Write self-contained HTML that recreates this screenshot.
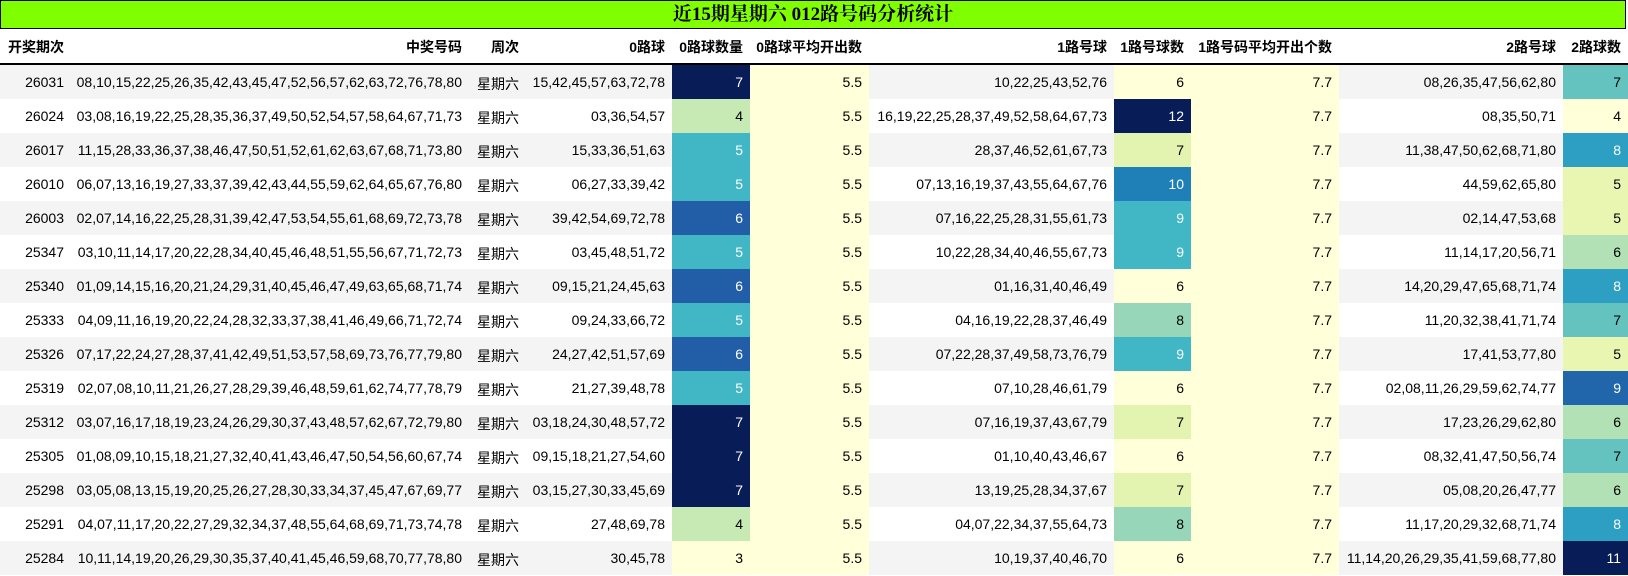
<!DOCTYPE html>
<html><head><meta charset="utf-8"><style>
body{margin:0;background:#fff;font-family:"Liberation Sans","Noto Sans CJK SC",sans-serif;font-size:14px;color:#000;width:1628px;height:576px;overflow:hidden;position:relative}
.title{position:absolute;left:0;top:0;width:1624px;height:27px;background:#7fff00;border:1px solid #000;text-align:center;font:bold 19px "Liberation Serif","Noto Serif CJK SC",serif;line-height:28px}
.r{position:absolute;left:0;width:1628px;display:flex}
.r div{box-sizing:border-box;height:100%;padding-right:7px;text-align:right;white-space:nowrap;flex:none;display:flex;align-items:center;justify-content:flex-end}
.h{top:29px;height:34px;border-bottom:2px solid #000;font-weight:bold}
.h div{padding-top:2px}
.o{background:#f4f4f4}
.c{color:#fff}
.a{background:#ffffd9}
.w{padding-top:4px}
</style></head><body>
<div class="title">近15期星期六 012路号码分析统计</div>
<div id="t"></div>
<script>
var B=[0,71,469,526,672,750,869,1114,1191,1339,1563,1628];
var d=[
["26031","08,10,15,22,25,26,35,42,43,45,47,52,56,57,62,63,72,76,78,80","15,42,45,57,63,72,78",7,"10,22,25,43,52,76",6,"08,26,35,47,56,62,80",7],
["26024","03,08,16,19,22,25,28,35,36,37,49,50,52,54,57,58,64,67,71,73","03,36,54,57",4,"16,19,22,25,28,37,49,52,58,64,67,73",12,"08,35,50,71",4],
["26017","11,15,28,33,36,37,38,46,47,50,51,52,61,62,63,67,68,71,73,80","15,33,36,51,63",5,"28,37,46,52,61,67,73",7,"11,38,47,50,62,68,71,80",8],
["26010","06,07,13,16,19,27,33,37,39,42,43,44,55,59,62,64,65,67,76,80","06,27,33,39,42",5,"07,13,16,19,37,43,55,64,67,76",10,"44,59,62,65,80",5],
["26003","02,07,14,16,22,25,28,31,39,42,47,53,54,55,61,68,69,72,73,78","39,42,54,69,72,78",6,"07,16,22,25,28,31,55,61,73",9,"02,14,47,53,68",5],
["25347","03,10,11,14,17,20,22,28,34,40,45,46,48,51,55,56,67,71,72,73","03,45,48,51,72",5,"10,22,28,34,40,46,55,67,73",9,"11,14,17,20,56,71",6],
["25340","01,09,14,15,16,20,21,24,29,31,40,45,46,47,49,63,65,68,71,74","09,15,21,24,45,63",6,"01,16,31,40,46,49",6,"14,20,29,47,65,68,71,74",8],
["25333","04,09,11,16,19,20,22,24,28,32,33,37,38,41,46,49,66,71,72,74","09,24,33,66,72",5,"04,16,19,22,28,37,46,49",8,"11,20,32,38,41,71,74",7],
["25326","07,17,22,24,27,28,37,41,42,49,51,53,57,58,69,73,76,77,79,80","24,27,42,51,57,69",6,"07,22,28,37,49,58,73,76,79",9,"17,41,53,77,80",5],
["25319","02,07,08,10,11,21,26,27,28,29,39,46,48,59,61,62,74,77,78,79","21,27,39,48,78",5,"07,10,28,46,61,79",6,"02,08,11,26,29,59,62,74,77",9],
["25312","03,07,16,17,18,19,23,24,26,29,30,37,43,48,57,62,67,72,79,80","03,18,24,30,48,57,72",7,"07,16,19,37,43,67,79",7,"17,23,26,29,62,80",6],
["25305","01,08,09,10,15,18,21,27,32,40,41,43,46,47,50,54,56,60,67,74","09,15,18,21,27,54,60",7,"01,10,40,43,46,67",6,"08,32,41,47,50,56,74",7],
["25298","03,05,08,13,15,19,20,25,26,27,28,30,33,34,37,45,47,67,69,77","03,15,27,30,33,45,69",7,"13,19,25,28,34,37,67",7,"05,08,20,26,47,77",6],
["25291","04,07,11,17,20,22,27,29,32,34,37,48,55,64,68,69,71,73,74,78","27,48,69,78",4,"04,07,22,34,37,55,64,73",8,"11,17,20,29,32,68,71,74",8],
["25284","10,11,14,19,20,26,29,30,35,37,40,41,45,46,59,68,70,77,78,80","30,45,78",3,"10,19,37,40,46,70",6,"11,14,20,26,29,35,41,59,68,77,80",11]];
var c0={3:"#ffffd9",4:"#c7e9b4",5:"#41b6c4",6:"#225ea8",7:"#081d58"};
var c1={6:"#ffffd9",7:"#e3f4b1",8:"#97d6b9",9:"#41b6c4",10:"#1f80b8",12:"#081d58"};
var c2={4:"#ffffd9",5:"#e9f6b1",6:"#b2e1b6",7:"#65c3bf",8:"#2c9fc2",9:"#2165ab",11:"#081d58"};
function D(i,txt,cls,st){return '<div class="'+(cls||'')+'" style="width:'+(B[i+1]-B[i])+'px;'+(st||'')+'">'+txt+'</div>';}
function N(i,v,m,t){return D(i,v,v>=t?'c':'','background:'+m[v]);}
var H=["开奖期次","中奖号码","周次","0路球","0路球数量","0路球平均开出数","1路号球","1路号球数","1路号码平均开出个数","2路号球","2路球数"];
var h='<div class="r h">';H.forEach(function(s,i){h+=D(i,s,'',i==0?'justify-content:flex-start;padding-left:8px':'');});h+='</div>';
d.forEach(function(r,k){var t=Math.round(65+k*34),b=Math.round(65+(k+1)*34);h+='<div class="r'+(k%2==0?' o':'')+'" style="top:'+t+'px;height:'+(b-t)+'px">'+D(0,r[0])+D(1,r[1])+D(2,'星期六','w')+D(3,r[2])+N(4,r[3],c0,5)+D(5,'5.5','a')+D(6,r[4])+N(7,r[5],c1,9)+D(8,'7.7','a')+D(9,r[6])+N(10,r[7],c2,8)+'</div>';});
document.getElementById('t').innerHTML=h;
</script>
</body></html>
